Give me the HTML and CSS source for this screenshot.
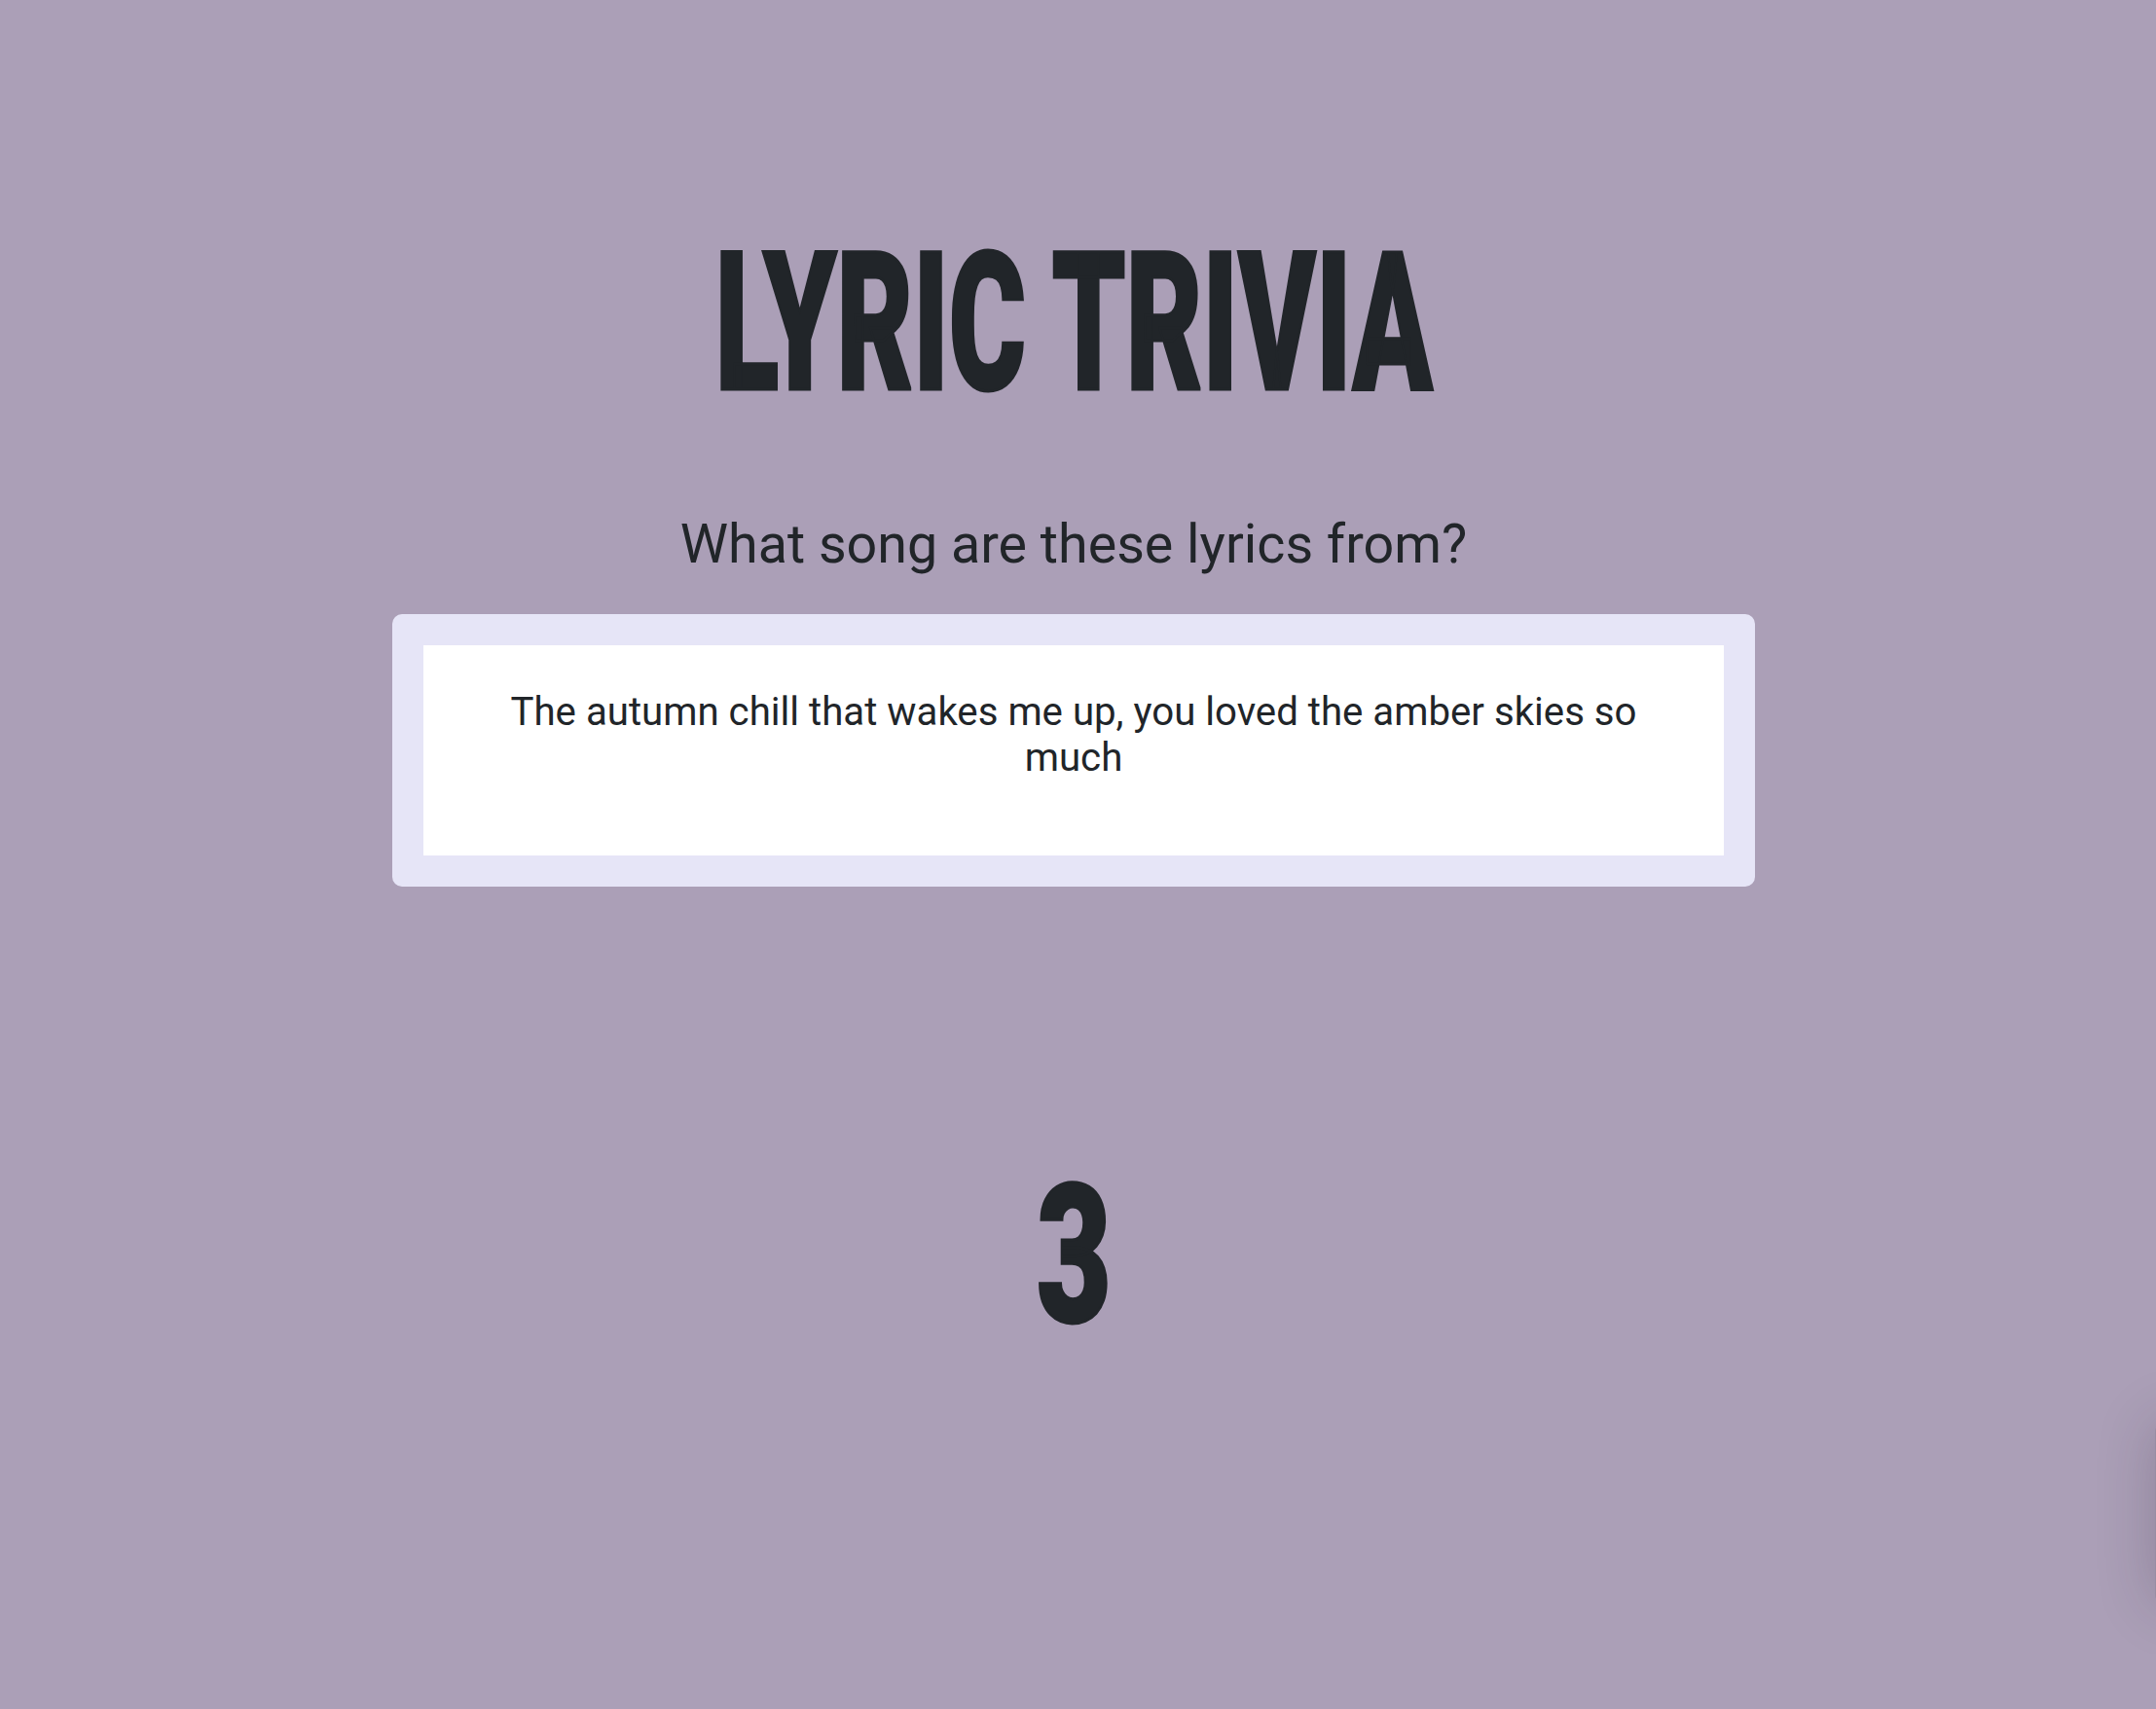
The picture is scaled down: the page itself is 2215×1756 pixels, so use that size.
FILE: index.html
```html
<!DOCTYPE html>
<html lang="en">
<head>
<meta charset="utf-8">
<title>Lyric Trivia</title>
<link rel="stylesheet" href="styles.css">
</head>
<body>
<main class="page">
  <h1 class="title">LYRIC TRIVIA</h1>
  <h2 class="question">What song are these lyrics from?</h2>
  <section class="card">
    <div class="card-inner">
      <p class="lyric">The autumn chill that wakes me up, you loved the amber skies so much</p>
    </div>
  </section>
  <div class="countdown">3</div>
</main>
<div class="edge-panel"></div>
</body>
</html>
```
FILE: styles.css
```css
html, body {
  margin: 0;
  padding: 0;
}
body {
  background: #ab9fb7;
  color: #212529;
  font-family: Roboto, "Liberation Sans", sans-serif;
  min-height: 100vh;
  overflow: hidden;
}
.page {
  display: flex;
  flex-direction: column;
  align-items: center;
  padding-top: 233px;
  padding-right: 9px;
}
.title {
  margin: 0;
  font-family: Roboto, "Liberation Sans", sans-serif;
  font-weight: 900;
  font-size: 198px;
  line-height: 1;
  height: 198px;
  white-space: nowrap;
  transform: scaleX(0.61);
  transform-origin: center;
  -webkit-text-stroke: 3px #212529;
}
.question {
  margin: 95px 0 0;
  font-weight: 400;
  font-size: 55.6px;
  line-height: 66px;
}
.card {
  margin-top: 39px;
  width: 1400px;
  box-sizing: border-box;
  padding: 32px;
  background: #e6e5f7;
  border-radius: 10px;
}
.card-inner {
  background: #fff;
  height: 216px;
  box-sizing: border-box;
  padding: 45px 60px 0;
}
.lyric {
  margin: 0;
  text-align: center;
  font-size: 40.2px;
  line-height: 47px;
}
.countdown {
  margin-top: 280px;
  font-weight: 900;
  font-size: 198px;
  line-height: 1;
  height: 198px;
  transform: scaleX(0.67);
  -webkit-text-stroke: 3px #212529;
}
.edge-panel {
  position: fixed;
  top: 1463px;
  left: 2214px;
  width: 300px;
  height: 184px;
  background: #978da3;
  border-radius: 8px;
  box-shadow: 0 0 60px rgba(40, 30, 50, 0.22);
}
```
